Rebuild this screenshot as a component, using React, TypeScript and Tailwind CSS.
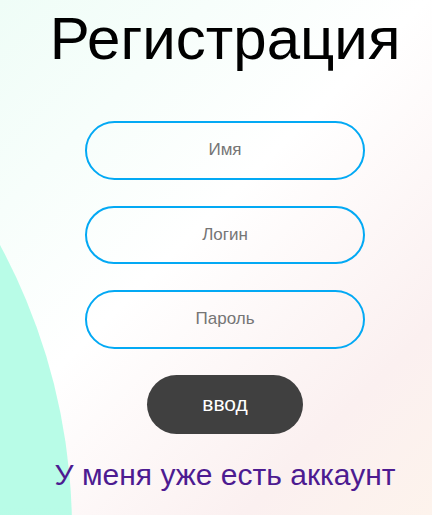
import React from "react";

const fields = ["Имя", "Логин", "Пароль"];

const App: React.FC = () => {
  return (
    <div
      className="relative w-full h-[515px] overflow-hidden bg-[linear-gradient(135deg,#effdf7_0%,#ffffff_45%,#fbf0f0_80%,#fdf3ec_100%)]"
      style={{ fontFamily: '"Liberation Sans", Arial, sans-serif' }}
    >
      {/* decorative blob on the left */}
      <div className="absolute left-[-1128px] top-[-70px] w-[1200px] h-[1200px] rounded-full bg-[linear-gradient(180deg,#b8fce7_48%,#c2e2df_100%)]" />

      {/* main column */}
      <div className="relative w-[450px] flex flex-col items-center">
        <h1 className="mt-[9px] text-[60px] leading-[60px] text-black font-normal">Регистрация</h1>

        <form className="mt-[52px] flex flex-col items-center gap-[26px]">
          {fields.map((f) => (
            <input
              key={f}
              placeholder={f}
              className="w-[280px] h-[58.5px] rounded-full border-2 border-[#03a9f4] bg-transparent text-center text-[17px] text-[#757575] placeholder:text-[#757575] outline-none"
            />
          ))}
          <button
            type="button"
            className="w-[156px] h-[59px] rounded-full bg-[#404040] text-white text-[21px]"
          >
            ввод
          </button>
        </form>

        <a className="mt-[25px] text-[30px] leading-[32px] text-[#4d1b91]">У меня уже есть аккаунт</a>
      </div>
    </div>
  );
};

export default App;
